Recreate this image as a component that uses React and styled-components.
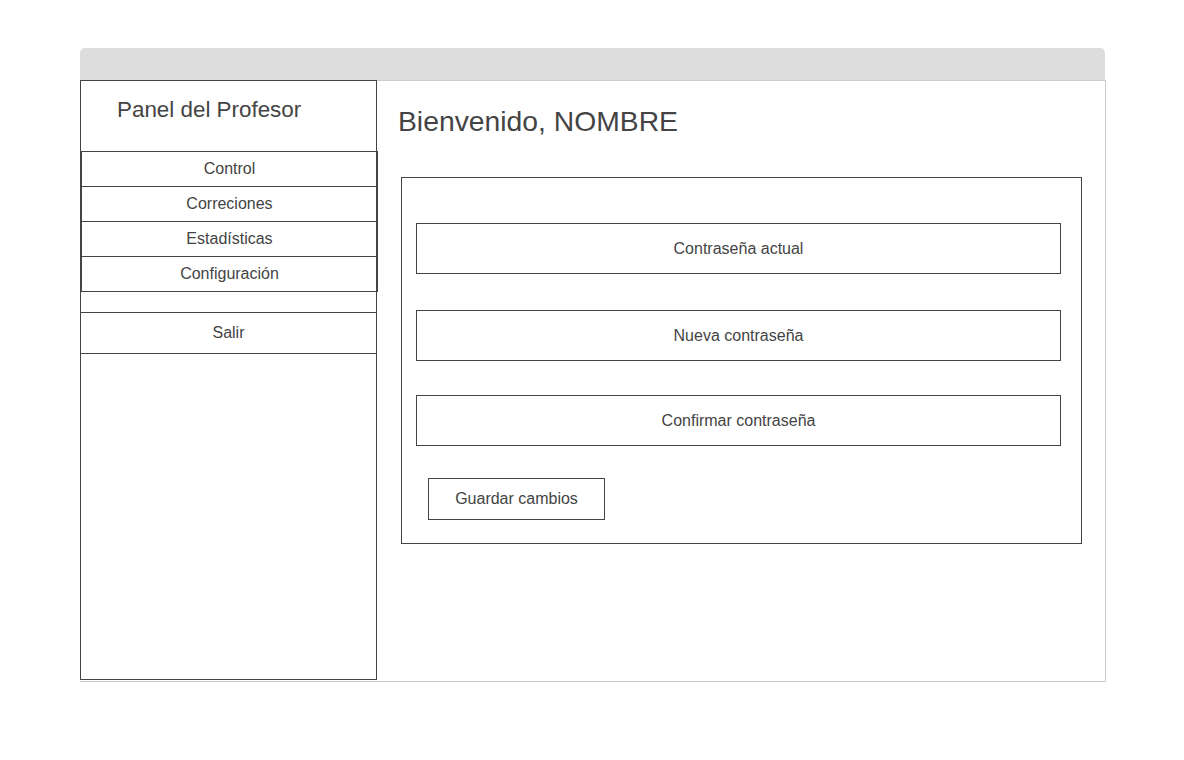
import React from 'react';
import styled, { createGlobalStyle } from 'styled-components';

const GlobalStyle = createGlobalStyle`
  body {
    margin: 0;
    background: #ffffff;
    font-family: 'Liberation Sans', Arial, sans-serif;
    color: #444444;
  }
  * {
    box-sizing: border-box;
  }
`;

// Page and window frame
const Page = styled.div`
  padding: 48px 0 0 80px;
`;

const Window = styled.div`
  width: 1026px;
`;

const TopBar = styled.div`
  width: 1025px;
  height: 32px;
  background: #dddddd;
  border-radius: 5px 5px 0 0;
`;

const WindowBody = styled.div`
  display: flex;
  align-items: flex-start;
  height: 602px;
  border-right: 1px solid #cccccc;
  border-bottom: 1px solid #cccccc;
`;

// Sidebar
const Sidebar = styled.aside`
  width: 297px;
  height: 600px;
  flex-shrink: 0;
  border: 1px solid #444444;
  display: flex;
  flex-direction: column;
`;

const SidebarTitle = styled.h2`
  margin: 0;
  height: 70px;
  padding: 16px 0 0 36px;
  font-size: 22.4px;
  font-weight: 400;
  line-height: 26px;
`;

const Menu = styled.nav`
  width: 297px;
  border-bottom: 1px solid #444444;
`;

const MenuItem = styled.div`
  height: 35px;
  border: 1px solid #444444;
  border-bottom: none;
  font-size: 16px;
  line-height: 34px;
  text-align: center;
`;

const Logout = styled.div`
  margin-top: 20px;
  height: 42px;
  border-top: 1px solid #444444;
  border-bottom: 1px solid #444444;
  font-size: 16px;
  line-height: 40px;
  text-align: center;
`;

// Main area
const Main = styled.main`
  flex: 1;
  align-self: stretch;
  border-top: 1px solid #cccccc;
`;

const Welcome = styled.h1`
  margin: 0;
  padding: 23px 0 0 21px;
  height: 96px;
  font-size: 28.3px;
  font-weight: 400;
  line-height: 34px;
`;

const FormBox = styled.form`
  margin: 0 0 0 24px;
  width: 681px;
  height: 367px;
  border: 1px solid #444444;
  padding: 45px 0 0 14px;
  display: flex;
  flex-direction: column;
  align-items: flex-start;
`;

const Field = styled.input`
  width: 645px;
  height: 51px;
  margin: ${p => p.$top}px 0 0 0;
  border: 1px solid #444444;
  background: #ffffff;
  font-family: 'Liberation Sans', Arial, sans-serif;
  font-size: 16px;
  text-align: center;
  color: #444444;
  outline: none;

  &::placeholder {
    color: #444444;
    opacity: 1;
  }
`;

const SaveButton = styled.button`
  margin: 32px 0 0 12px;
  width: 177px;
  height: 42px;
  padding: 0;
  border: 1px solid #444444;
  background: #ffffff;
  font-family: 'Liberation Sans', Arial, sans-serif;
  font-size: 16px;
  color: #444444;
  cursor: pointer;
`;

const menuItems = ['Control', 'Correciones', 'Estadísticas', 'Configuración'];

const fields = [
  { label: 'Contraseña actual', top: 0 },
  { label: 'Nueva contraseña', top: 36 },
  { label: 'Confirmar contraseña', top: 34 },
];

export default function App() {
  return (
    <>
      <GlobalStyle />
      <Page>
        <Window>
          <TopBar />
          <WindowBody>
            <Sidebar>
              <SidebarTitle>Panel del Profesor</SidebarTitle>
              <Menu>
                {menuItems.map(item => (
                  <MenuItem key={item}>{item}</MenuItem>
                ))}
              </Menu>
              <Logout>Salir</Logout>
            </Sidebar>
            <Main>
              <Welcome>Bienvenido, NOMBRE</Welcome>
              <FormBox onSubmit={e => e.preventDefault()}>
                {fields.map(f => (
                  <Field key={f.label} type="password" placeholder={f.label} $top={f.top} />
                ))}
                <SaveButton type="submit">Guardar cambios</SaveButton>
              </FormBox>
            </Main>
          </WindowBody>
        </Window>
      </Page>
    </>
  );
}
